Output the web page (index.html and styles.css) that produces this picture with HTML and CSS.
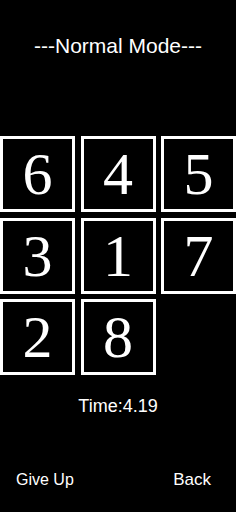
FILE: index.html
```html
<!DOCTYPE HTML>
<html>
    <head>
        <meta http-equiv="Content-Type" content="text/html; charset=UTF-8"/>
        <title>puzzle</title>
        <link rel="stylesheet" href="styles.css">
    </head>
    <body>
        <div class="screen">
            <div class="title">---Normal Mode---</div>
            <div class="board">
                <div class="tile">6</div>
                <div class="tile">4</div>
                <div class="tile">5</div>
                <div class="tile">3</div>
                <div class="tile">1</div>
                <div class="tile">7</div>
                <div class="tile">2</div>
                <div class="tile">8</div>
            </div>
            <div class="timer">Time:4.19</div>
            <div class="actions">
                <span class="btn give-up">Give Up</span>
                <span class="btn back">Back</span>
            </div>
        </div>
    </body>
</html>
```

FILE: styles.css
```css
html{
    background-color:#000;
    color:#fff;
}
body{
    margin:0;
    font-family:"Liberation Sans", Arial, sans-serif;
}
.screen{
    display:flex;
    flex-direction:column;
    align-items:center;
    width:236px;
    height:512px;
}
.title{
    margin-top:34px;
    font-size:21px;
    line-height:24px;
}
.board{
    margin-top:78px;
    display:grid;
    grid-template-columns:75px 75px 75px;
    grid-auto-rows:76px;
    column-gap:5.5px;
    row-gap:5.5px;
    width:236px;
}
.tile{
    box-sizing:border-box;
    border:3px solid #fff;
    background:#000;
    display:flex;
    align-items:center;
    justify-content:center;
    font-family:"Liberation Serif", "Times New Roman", serif;
    font-size:60px;
    line-height:1;
}
.timer{
    margin-top:21px;
    font-size:18px;
    line-height:21px;
}
.actions{
    margin-top:53px;
    align-self:stretch;
    display:flex;
    align-items:baseline;
    justify-content:space-between;
    padding:0 25px 0 16px;
    line-height:20px;
}
.give-up{
    font-size:16px;
}
.back{
    font-size:17px;
}
```
